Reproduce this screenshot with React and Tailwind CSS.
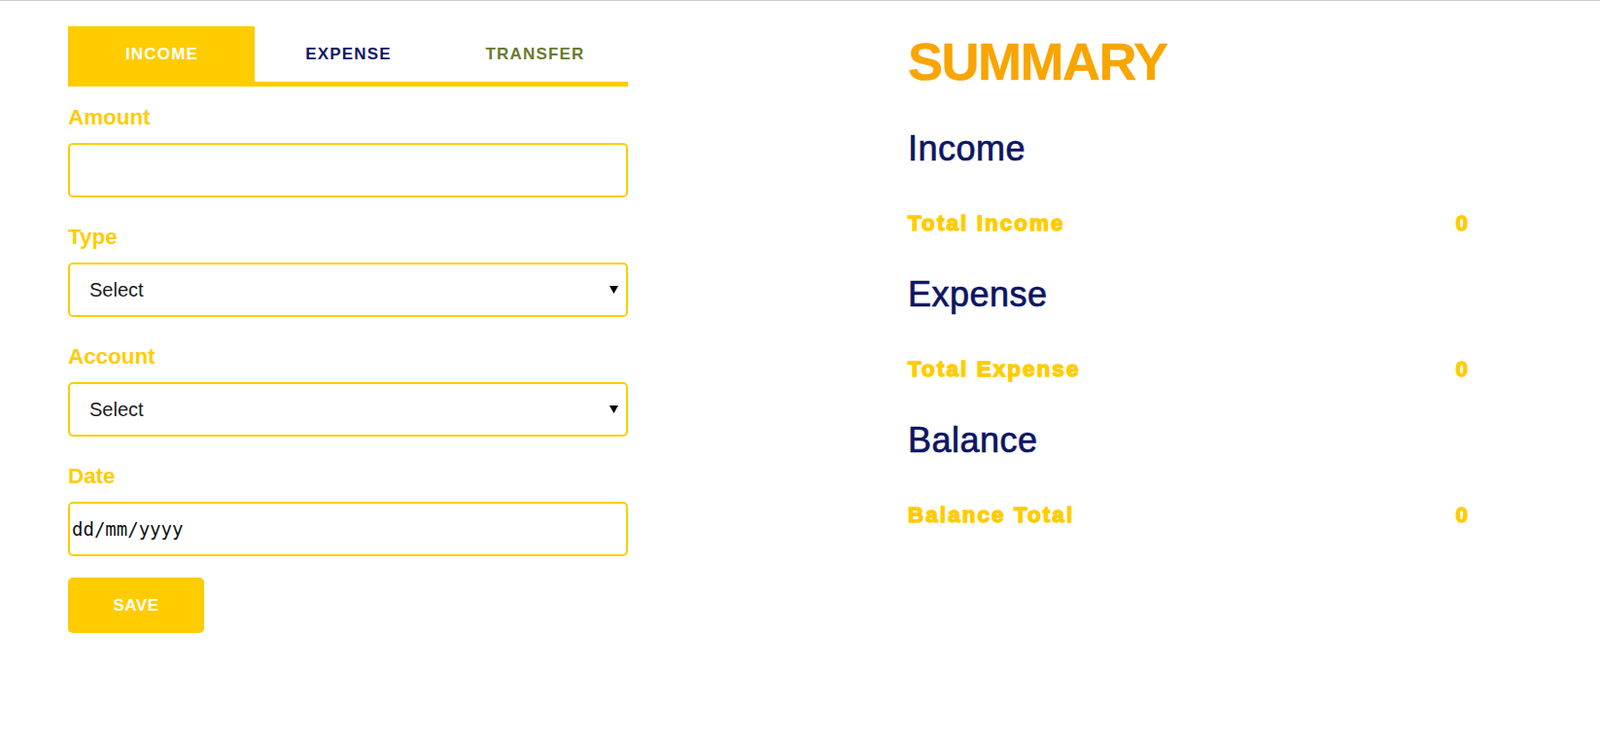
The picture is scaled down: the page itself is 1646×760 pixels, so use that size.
import React from "react";

function Label({ children }) {
  return (
    <label className="block text-[22.4px] leading-[26px] font-bold text-[#ffcc00]">
      {children}
    </label>
  );
}

function SelectBox() {
  return (
    <div className="relative mt-[13px]">
      <select className="appearance-none block w-full h-[56px] border-2 border-[#ffcc00] rounded-[5px] bg-white pl-[20px] text-[20px] text-[#1c1c1c] font-['Liberation_Sans',Arial,sans-serif] outline-none">
        <option>Select</option>
      </select>
      <svg
        className="pointer-events-none absolute right-[10px] top-1/2 -translate-y-1/2"
        width="9"
        height="8"
        viewBox="0 0 9 8"
      >
        <polygon points="0,0 9,0 4.5,8" fill="#000" />
      </svg>
    </div>
  );
}

const sections = [
  { title: "Income", label: "Total Income", value: "0" },
  { title: "Expense", label: "Total Expense", value: "0" },
  { title: "Balance", label: "Balance Total", value: "0" },
];

export default function App() {
  return (
    <div className="min-h-screen bg-white border-t border-[#cccccc] font-['Liberation_Sans',Arial,sans-serif]">
      <div className="flex pl-[70px] gap-[288px]">
        {/* Left: form */}
        <div className="w-[576px] pt-[26px]">
          <div className="flex border-b-[5px] border-[#ffcc00]">
            <button className="w-[192px] h-[57px] bg-[#ffcc00] text-white text-[17px] font-bold tracking-[1.2px] pl-[1px]">
              INCOME
            </button>
            <button className="w-[192px] h-[57px] bg-white text-[#0f1766] text-[17px] font-bold tracking-[1.2px] pl-[1px]">
              EXPENSE
            </button>
            <button className="w-[192px] h-[57px] bg-white text-[#6a7b2f] text-[17px] font-bold tracking-[1.2px] pl-[1px]">
              TRANSFER
            </button>
          </div>

          <form className="flex flex-col" onSubmit={(e) => e.preventDefault()}>
            <div className="mt-[19px]">
              <Label>Amount</Label>
              <input
                type="text"
                className="mt-[13px] block w-full h-[56px] border-2 border-[#ffcc00] rounded-[5px] bg-white px-[10px] text-[19px] outline-none"
              />
            </div>
            <div className="mt-[28px]">
              <Label>Type</Label>
              <SelectBox />
            </div>
            <div className="mt-[28px]">
              <Label>Account</Label>
              <SelectBox />
            </div>
            <div className="mt-[28px]">
              <Label>Date</Label>
              <input
                type="text"
                placeholder="dd/mm/yyyy"
                className="mt-[13px] block w-full h-[56px] border-2 border-[#ffcc00] rounded-[5px] bg-white pl-[2px] text-[19px] text-[#111] placeholder:text-[#111] font-['DejaVu_Sans_Mono',monospace] outline-none"
              />
            </div>
            <button
              type="submit"
              className="mt-[22px] w-[140px] h-[57px] rounded-[5px] bg-[#ffcc00] text-white text-[17px] font-bold tracking-[0.5px]"
            >
              SAVE
            </button>
          </form>
        </div>

        {/* Right: summary */}
        <div className="w-[576px] pt-[31px]">
          <h1 className="text-[54px] leading-[62px] font-bold tracking-[-1.5px] text-[#f8a500] [-webkit-text-stroke:0.4px_#f8a500]">
            SUMMARY
          </h1>
          <div className="mt-[38px] flex flex-col gap-[39px]">
            {sections.map((s) => (
              <section key={s.title}>
                <h2 className="text-[36px] leading-[42px] tracking-[0.5px] text-[#0d1563] [-webkit-text-stroke:0.7px_#0d1563]">
                  {s.title}
                </h2>
                <div className="mt-[43px] flex justify-between text-[22.4px] leading-[26px] font-bold text-[#ffcc00] [-webkit-text-stroke:1.4px_#ffcc00]">
                  <span className="tracking-[2.1px]">{s.label}</span>
                  <span>{s.value}</span>
                </div>
              </section>
            ))}
          </div>
        </div>
      </div>
    </div>
  );
}
